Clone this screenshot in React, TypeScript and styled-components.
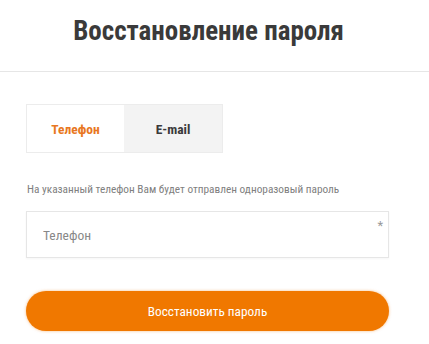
import { useState } from "react";
import styled, { createGlobalStyle } from "styled-components";

const Global = createGlobalStyle`
  html, body {
    margin: 0;
    padding: 0;
    background: #fff;
  }
  body {
    font-family: "Roboto Condensed", Roboto, "Liberation Sans", sans-serif;
    font-stretch: condensed;
    color: #3a3a3a;
  }
`;

const Page = styled.div`
  width: 429px;
  height: 344px;
  overflow: hidden;
`;

const Header = styled.div`
  height: 72px;
  border-bottom: 1px solid #e6e6e6;
  display: flex;
  justify-content: center;
  align-items: center;
  padding: 0 12px 10px 0;
  box-sizing: border-box;
`;

const Title = styled.h1`
  margin: 0;
  font-size: 27px;
  font-weight: 700;
  color: #3a3a3a;
`;

const Body = styled.div`
  padding: 32px 40px 0 26px;
`;

const Tabs = styled.div`
  display: grid;
  grid-template-columns: 97px 98px;
  width: 195px;
  border: 1px solid #ececec;
`;

const Tab = styled.button<{ $active: boolean }>`
  height: 47px;
  border: none;
  margin: 0;
  padding: 0;
  font-family: inherit;
  font-stretch: inherit;
  font-size: 13.5px;
  font-weight: 700;
  cursor: pointer;
  background: ${({ $active }) => ($active ? "#fff" : "#f3f3f3")};
  color: ${({ $active }) => ($active ? "#e87722" : "#3a3a3a")};
`;

const Hint = styled.p`
  margin: 30px 0 0 1px;
  font-size: 11.3px;
  color: #808080;
`;

const Field = styled.div`
  position: relative;
  margin-top: 15px;
`;

const Input = styled.input`
  width: 100%;
  height: 47px;
  box-sizing: border-box;
  border: 1px solid #e6e6e6;
  box-shadow: 0 1px 2px rgba(0, 0, 0, 0.04);
  padding: 0 16px;
  font-family: inherit;
  font-stretch: inherit;
  font-size: 13.5px;
  color: #333;
  outline: none;
  &::placeholder {
    color: #888;
  }
`;

const Required = styled.span`
  position: absolute;
  right: 6px;
  top: 7px;
  font-size: 13px;
  color: #999;
`;

const Submit = styled.button`
  display: block;
  width: 100%;
  height: 40px;
  margin-top: 33px;
  border: none;
  border-radius: 20px;
  background: #f07800;
  box-shadow: 0 0 3px rgba(240, 120, 0, 0.5);
  color: #fff;
  font-family: inherit;
  font-stretch: inherit;
  font-size: 13.3px;
  cursor: pointer;
`;

export default function App() {
  const [tab, setTab] = useState<"phone" | "email">("phone");
  return (
    <Page>
      <Global />
      <Header>
        <Title>Восстановление пароля</Title>
      </Header>
      <Body>
        <Tabs>
          <Tab $active={tab === "phone"} onClick={() => setTab("phone")}>
            Телефон
          </Tab>
          <Tab $active={tab === "email"} onClick={() => setTab("email")}>
            E-mail
          </Tab>
        </Tabs>
        <Hint>На указанный телефон Вам будет отправлен одноразовый пароль</Hint>
        <Field>
          <Input placeholder="Телефон" />
          <Required>*</Required>
        </Field>
        <Submit>Восстановить пароль</Submit>
      </Body>
    </Page>
  );
}
